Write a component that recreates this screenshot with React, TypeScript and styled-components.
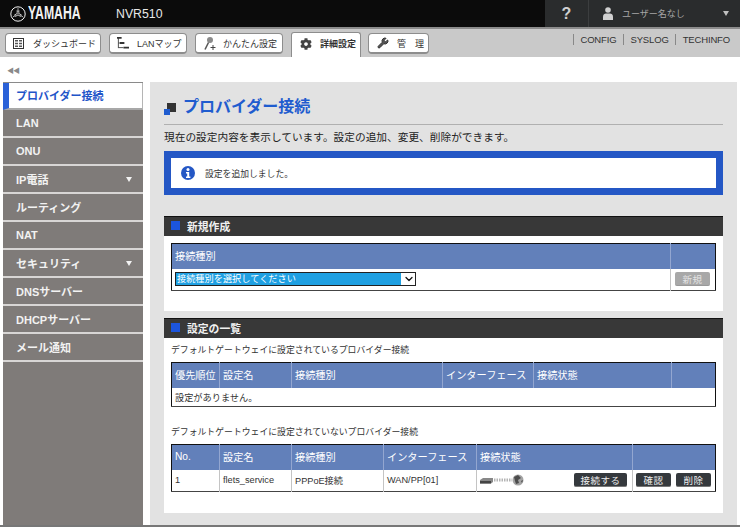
import styled, { createGlobalStyle } from 'styled-components';
import { ChevronDown, Wrench } from 'lucide-react';
import { FaCog } from 'react-icons/fa';

const GlobalStyle = createGlobalStyle`
	html, body {
		margin: 0;
		padding: 0;
		background: #fff;
	}

	body {
		font-family: "Liberation Sans", "Noto Sans CJK JP", sans-serif;
		font-size: 11px;
		color: #222;
	}

	* {
		box-sizing: border-box;
	}
`;

const Page = styled.div`
	width: 740px;
	height: 527px;
	overflow: hidden;
	display: flex;
	flex-direction: column;
	border-bottom: 2px solid #777;
`;

const Header = styled.header`
	height: 29px;
	flex: none;
	display: flex;
	align-items: stretch;
	background: #0b0b0b;
	border-bottom: 2px solid #8c8c8c;
`;

const Logo = styled.div`
	width: 116px;
	padding-left: 10px;
	display: flex;
	align-items: center;
	gap: 2px;
	color: #f2f2f2;
`;

const LogoText = styled.span`
	font-size: 18px;
	font-weight: 700;
	transform: scaleX(0.68);
	transform-origin: left center;
	white-space: nowrap;
`;

const Model = styled.div`
	flex: 1;
	display: flex;
	align-items: center;
	color: #e8e8e8;
	font-size: 12.3px;
`;

const UserArea = styled.div`
	width: 195px;
	display: flex;
	align-items: stretch;
	background: #2a2c2d;
	color: #a6a6a6;
`;

const Help = styled.div`
	width: 44px;
	display: flex;
	align-items: center;
	justify-content: center;
	border-right: 1px solid #3c3e3f;
	font-size: 16px;
	font-weight: 700;
	color: #d0d0d0;
`;

const UserName = styled.div`
	flex: 1;
	display: flex;
	align-items: center;
	padding: 0 11px 0 14px;
	gap: 9px;
	font-size: 9px;
`;

const Caret = styled.span<{ $color: string }>`
	margin-left: auto;
	width: 0;
	height: 0;
	border-left: 3.5px solid transparent;
	border-right: 3.5px solid transparent;
	border-top: 5px solid ${(p) => p.$color};
`;

const TabBar = styled.nav`
	height: 28px;
	flex: none;
	display: flex;
	align-items: flex-start;
	padding: 4px 10px 0 5px;
	background: #c9c9c9;
`;

const TabButton = styled.div<{ $width: number; $pad: number; $gap: number; $active?: boolean }>`
	width: ${(p) => p.$width}px;
	height: ${(p) => (p.$active ? 25 : 21)}px;
	margin-right: ${(p) => (p.$active ? 7 : 8)}px;
	margin-top: ${(p) => (p.$active ? -1 : 0)}px;
	display: flex;
	align-items: center;
	padding: ${(p) => (p.$active ? `0 0 3px ${p.$pad}px` : `0 0 0 ${p.$pad}px`)};
	gap: ${(p) => p.$gap}px;
	background: #fff;
	border: 1px solid #8d8d8d;
	border-bottom: ${(p) => (p.$active ? 'none' : '2px solid #8d8d8d')};
	border-radius: ${(p) => (p.$active ? '3px 3px 0 0' : '4px')};
	font-size: 9px;
	font-weight: ${(p) => (p.$active ? 700 : 400)};
	color: #333;
	white-space: nowrap;
`;

const ToolLinks = styled.div`
	margin-left: auto;
	height: 12px;
	display: flex;
	align-items: center;
	font-size: 9.5px;
	color: #333;
`;

const ToolLink = styled.span`
	padding: 0 6.5px;
	border-left: 1px solid #888;
	line-height: 11px;
	letter-spacing: -0.15px;

	&:last-child {
		padding-right: 0;
	}
`;

const CollapseRow = styled.div`
	height: 25px;
	flex: none;
	padding: 10px 0 0 7px;
	font-size: 7px;
	line-height: 7px;
	color: #8a8a8a;
	letter-spacing: -1px;
`;

const Body = styled.div`
	flex: 1;
	min-height: 0;
	display: flex;
	gap: 7px;
	padding: 0 3px;
`;

const Sidebar = styled.aside`
	width: 140px;
	flex: none;
	background: #7f7b79;
	border-top: 1px solid #8a8a8a;
`;

const MenuItem = styled.div<{ $active?: boolean }>`
	height: 28px;
	display: flex;
	align-items: center;
	padding: ${(p) => (p.$active ? '0 11px 1px 7px' : '0 11px 0 13px')};
	font-size: 11px;
	font-weight: 700;
	color: ${(p) => (p.$active ? '#1f55c9' : '#f2f2f2')};
	background: ${(p) => (p.$active ? '#fff' : '#7f7b79')};
	border-bottom: 2px solid ${(p) => (p.$active ? '#a8a8a8' : '#d8d6d5')};
	border-left: ${(p) => (p.$active ? '6px solid #2a61d8' : 'none')};
	border-right: ${(p) => (p.$active ? '1px solid #b5b5b5' : 'none')};

	&:first-child {
		height: 27px;
	}
`;

const Main = styled.main`
	flex: 1;
	min-width: 0;
	background: #e2e2e2;
	padding: 14px 14px 0;
`;

const TitleRow = styled.div`
	height: 29px;
	padding-bottom: 6px;
	display: flex;
	align-items: center;
	gap: 7px;
	border-bottom: 1px solid #b0b0b0;

	svg {
		margin-top: 3px;
	}
`;

const Title = styled.h1`
	margin: 0;
	font-size: 16px;
	line-height: 22px;
	font-weight: 700;
	color: #1f5ccf;
`;

const Description = styled.p`
	margin: 0 0 2px;
	height: 24px;
	line-height: 24px;
	font-size: 10.7px;
	color: #222;
`;

const Notice = styled.div`
	height: 44px;
	margin-bottom: 21px;
	display: flex;
	align-items: center;
	gap: 10px;
	padding-left: 10px;
	background: #fff;
	border: 7px solid #2457c5;
	font-size: 8.8px;
	color: #333;
`;

const SectionHeader = styled.h2`
	margin: 0;
	height: 20px;
	display: flex;
	align-items: center;
	gap: 7px;
	padding: 0 0 2px 7px;
	background: #383838;
	border-top: 1px solid #111;
	font-size: 10.8px;
	font-weight: 700;
	color: #f0f0f0;

	&::before {
		content: '';
		width: 9px;
		height: 9px;
		background: #1c55dd;
	}
`;

const SectionBody = styled.section<{ $pad: string; $mb: number }>`
	padding: ${(p) => p.$pad};
	margin-bottom: ${(p) => p.$mb}px;
	background: #fff;
`;

const Caption = styled.div`
	height: 24px;
	line-height: 24px;
	font-size: 8.85px;
	color: #333;
`;

const Table = styled.table<{ $mb?: number }>`
	width: 100%;
	table-layout: fixed;
	border-collapse: collapse;
	margin-bottom: ${(p) => p.$mb ?? 0}px;
	border: 1.5px solid #111;
	border-bottom-color: #444;
`;

const Th = styled.th`
	height: 25px;
	padding: 0 0 1px 3px;
	background: #6280ba;
	border-left: 1px solid #93a6d0;
	font-size: 10.2px;
	font-weight: 400;
	color: #fff;
	text-align: left;
	white-space: nowrap;
	overflow: hidden;

	&:first-child {
		border-left: none;
	}
`;

const Td = styled.td<{ $align?: string; $height?: number; $pr?: number }>`
	height: ${(p) => p.$height ?? 22}px;
	padding: 0 ${(p) => p.$pr ?? 3}px 0 3px;
	border-left: 1px solid #c4c4c4;
	font-size: 9.2px;
	color: #333;
	text-align: ${(p) => p.$align ?? 'left'};
	white-space: nowrap;

	&:first-child {
		border-left: none;
	}
`;

const SelectWrap = styled.div`
	position: relative;
	width: 241px;
	height: 14px;
`;

const Select = styled.select`
	appearance: none;
	display: block;
	width: 100%;
	height: 14px;
	padding: 0 0 0 1px;
	border: 1px solid #222;
	border-right-color: #aaa;
	border-bottom-color: #aaa;
	border-radius: 0;
	outline: 1px solid #222;
	outline-offset: -1px;
	background: linear-gradient(to right, #1fa0e2 calc(100% - 14px), #fff 0);
	font-family: "Liberation Sans", "Noto Sans CJK JP", sans-serif;
	font-size: 9.2px;
	line-height: 12px;
	color: #fff;
`;

const SelectArrow = styled(ChevronDown)`
	position: absolute;
	right: 1px;
	top: 1px;
	color: #111;
	pointer-events: none;
`;

const ActionButton = styled.span<{ $disabled?: boolean; $width: number }>`
	display: inline-flex;
	align-items: center;
	justify-content: center;
	width: ${(p) => p.$width}px;
	height: 14px;
	border-radius: 2px;
	background: ${(p) => (p.$disabled ? '#a8a8a8' : '#35393d')};
	border-bottom: 1px solid ${(p) => (p.$disabled ? '#999' : '#777')};
	font-size: 9.5px;
	color: ${(p) => (p.$disabled ? '#e4e4e4' : '#eee')};
	letter-spacing: 0.5px;

	& + & {
		margin-left: 5px;
	}
`;

const StatusCell = styled.div`
	display: flex;
	align-items: center;
	justify-content: space-between;
	padding-right: 2px;
`;

function YamahaMark() {
	const fork = 'M-.9 0V-3.4M.9 0V-3.4M-.9-3.4A.9.9 0 0 0 .9-3.4M0-3.4V-6';
	return (
		<svg width="16" height="16" viewBox="-8 -8 16 16" fill="none" stroke="#f2f2f2">
			<circle r="7.2" strokeWidth="1" />
			{[0, 120, 240].map((a) => (
				<path key={a} d={fork} strokeWidth=".7" transform={`rotate(${a}) translate(0 -.2) scale(.95 .95)`} />
			))}
		</svg>
	);
}

function UserIcon() {
	return (
		<svg width="10" height="13" viewBox="0 0 10 13">
			<circle cx="5" cy="3" r="2.8" fill="#d0d0d0" />
			<path d="M0 13V9.500C0 7.500 1.500 6.500 3 6.500H7C8.500 6.500 10 7.500 10 9.500V13Z" fill="#d0d0d0" />
		</svg>
	);
}

function GridIcon() {
	return (
		<svg width="11" height="11" viewBox="0 0 11 11" fill="none">
			<rect x=".5" y=".5" width="10" height="10" stroke="#333" />
			<path d="M2 2h3v1.500H2zM6 2h3v1.500H6zM2 4.700h3v1.500H2zM6 4.700h3v1.500H6zM2 7.400h3v1.500H2zM6 7.400h3v1.500H6z" fill="#555" />
		</svg>
	);
}

function LanMapIcon() {
	return (
		<svg width="12" height="14" viewBox="0 0 13 14" fill="none">
			<path d="M1.500 1v11.500" stroke="#444" />
			<path d="M0 .5h5v2H0zM3 6h5v2H3zM7 11h6v2H7z" fill="#333" />
			<path d="M1.500 7H3M1.500 12H7" stroke="#444" />
		</svg>
	);
}

function WizardIcon() {
	return (
		<svg width="12" height="15" viewBox="0 0 12 15" fill="none">
			<circle cx="6" cy="4" r="3" fill="#8a8a8a" />
			<path d="M4.500 6.500 1 13.500" stroke="#555" strokeWidth="1.600" />
			<path d="M9 9v5M6.500 11.500h5" stroke="#444" />
		</svg>
	);
}

function TitleIcon() {
	return (
		<svg width="12" height="12" viewBox="0 0 12 12">
			<rect x="3" y="0" width="9" height="9" fill="#333" />
			<rect x="0" y="6" width="6" height="6" fill="#1f5ccf" />
		</svg>
	);
}

function InfoIcon() {
	return (
		<svg width="14" height="14" viewBox="0 0 14 14">
			<circle cx="7" cy="7" r="7" fill="#2457c5" />
			<circle cx="7" cy="3.400" r="1.500" fill="#fff" />
			<path d="M5 6h3.200v4.400H9.400V12H5v-1.600h1.200V7.500H5z" fill="#fff" />
		</svg>
	);
}

function LinkStatus() {
	return (
		<svg width="44" height="12" viewBox="0 0 44 12">
			<path d="M0 6 3 4H13V8L11 9.500H0Z" fill="#888" />
			<path d="M0 7H11V9.500H0Z" fill="#444" />
			<path d="M14 6H32" stroke="#b4b4b4" strokeWidth="3" strokeDasharray="1.500 1" />
			<circle cx="38" cy="6" r="5.500" fill="#a4a4a4" />
			<path d="M34 3 38 1 41 4 38 6 39 9 36 10 35 7Z" fill="#4c4c4c" />
			<path d="M41 7 43 6 42 9Z" fill="#4c4c4c" />
		</svg>
	);
}

const menu = [
	{ label: 'LAN' },
	{ label: 'ONU' },
	{ label: 'IP電話', sub: true },
	{ label: 'ルーティング' },
	{ label: 'NAT' },
	{ label: 'セキュリティ', sub: true },
	{ label: 'DNSサーバー' },
	{ label: 'DHCPサーバー' },
	{ label: 'メール通知' },
];

export default function App() {
	return (
		<Page>
			<GlobalStyle />
			<Header>
				<Logo>
					<YamahaMark />
					<LogoText>YAMAHA</LogoText>
				</Logo>
				<Model>NVR510</Model>
				<UserArea>
					<Help>?</Help>
					<UserName>
						<UserIcon />
						ユーザー名なし
						<Caret $color="#c0c0c0" />
					</UserName>
				</UserArea>
			</Header>

			<TabBar>
				<TabButton $width={96} $pad={7} $gap={9}>
					<GridIcon />
					ダッシュボード
				</TabButton>
				<TabButton $width={78} $pad={7} $gap={8}>
					<LanMapIcon />
					LANマップ
				</TabButton>
				<TabButton $width={88} $pad={8} $gap={7}>
					<WizardIcon />
					かんたん設定
				</TabButton>
				<TabButton $width={70} $pad={8} $gap={8} $active>
					<FaCog size={12} color="#444" />
					詳細設定
				</TabButton>
				<TabButton $width={61} $pad={8} $gap={8}>
					<Wrench size={12} color="#333" fill="#555" />
					管　理
				</TabButton>
				<ToolLinks>
					<ToolLink>CONFIG</ToolLink>
					<ToolLink>SYSLOG</ToolLink>
					<ToolLink>TECHINFO</ToolLink>
				</ToolLinks>
			</TabBar>

			<CollapseRow>◀◀</CollapseRow>

			<Body>
				<Sidebar>
					<MenuItem $active>プロバイダー接続</MenuItem>
					{menu.map((item) => (
						<MenuItem key={item.label}>
							{item.label}
							{item.sub && <Caret $color="#f2f2f2" />}
						</MenuItem>
					))}
				</Sidebar>

				<Main>
					<TitleRow>
						<TitleIcon />
						<Title>プロバイダー接続</Title>
					</TitleRow>
					<Description>現在の設定内容を表示しています。設定の追加、変更、削除ができます。</Description>
					<Notice>
						<InfoIcon />
						設定を追加しました。
					</Notice>

					<SectionHeader>新規作成</SectionHeader>
					<SectionBody $pad="7px 7px 20px" $mb={7}>
						<Table>
							<colgroup>
								<col />
								<col width="45" />
							</colgroup>
							<thead>
								<tr>
									<Th>接続種別</Th>
									<Th />
								</tr>
							</thead>
							<tbody>
								<tr>
									<Td>
										<SelectWrap>
											<Select>
												<option>接続種別を選択してください</option>
											</Select>
											<SelectArrow size={12} strokeWidth={2.5} />
										</SelectWrap>
									</Td>
									<Td $align="right" $pr={5}>
										<ActionButton $disabled $width={35}>新規</ActionButton>
									</Td>
								</tr>
							</tbody>
						</Table>
					</SectionBody>

					<SectionHeader>設定の一覧</SectionHeader>
					<SectionBody $pad="0 7px 21px" $mb={0}>
						<Caption>デフォルトゲートウェイに設定されているプロバイダー接続</Caption>
						<Table $mb={13}>
							<colgroup>
								<col width="48" />
								<col width="72" />
								<col width="151" />
								<col width="91" />
								<col width="138" />
								<col />
							</colgroup>
							<thead>
								<tr>
									<Th>優先順位</Th>
									<Th>設定名</Th>
									<Th>接続種別</Th>
									<Th>インターフェース</Th>
									<Th>接続状態</Th>
									<Th />
								</tr>
							</thead>
							<tbody>
								<tr>
									<Td colSpan={6} $height={19}>設定がありません。</Td>
								</tr>
							</tbody>
						</Table>

						<Caption>デフォルトゲートウェイに設定されていないプロバイダー接続</Caption>
						<Table>
							<colgroup>
								<col width="48" />
								<col width="72" />
								<col width="92" />
								<col width="93" />
								<col width="156" />
								<col />
							</colgroup>
							<thead>
								<tr>
									<Th>No.</Th>
									<Th>設定名</Th>
									<Th>接続種別</Th>
									<Th>インターフェース</Th>
									<Th>接続状態</Th>
									<Th />
								</tr>
							</thead>
							<tbody>
								<tr>
									<Td>1</Td>
									<Td>flets_service</Td>
									<Td>PPPoE接続</Td>
									<Td>WAN/PP[01]</Td>
									<Td>
										<StatusCell>
											<LinkStatus />
											<ActionButton $width={53}>接続する</ActionButton>
										</StatusCell>
									</Td>
									<Td $align="right" $pr={5}>
										<ActionButton $width={35}>確認</ActionButton>
										<ActionButton $width={35}>削除</ActionButton>
									</Td>
								</tr>
							</tbody>
						</Table>
					</SectionBody>
				</Main>
			</Body>
		</Page>
	);
}
